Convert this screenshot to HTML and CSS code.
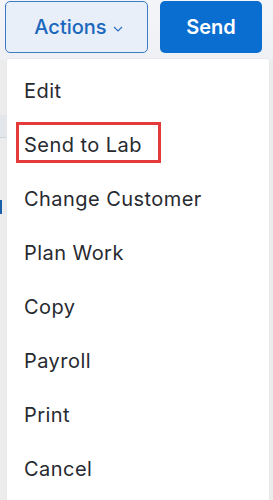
FILE: index.html
```html
<!DOCTYPE html>
<html>
<head>
<meta charset="utf-8">
<link rel="stylesheet" href="styles.css">
</head>
<body>
<div class="page">
  <div class="toolbar">
    <button class="btn-actions">Actions
      <svg class="chev" width="10" height="6" viewBox="0 0 10 6"><path d="M1 1 L5 5 L9 1" fill="none" stroke="#2a6fc0" stroke-width="1.2"/></svg>
    </button>
    <button class="btn-send">Send</button>
  </div>
  <div class="behind">
    <div class="band"></div>
    <div class="mark"></div>
  </div>
  <ul class="menu">
    <li class="item">Edit</li>
    <li class="item"><span class="hl">Send to Lab</span></li>
    <li class="item">Change Customer</li>
    <li class="item">Plan Work</li>
    <li class="item">Copy</li>
    <li class="item">Payroll</li>
    <li class="item">Print</li>
    <li class="item">Cancel</li>
  </ul>
</div>
</body>
</html>
```
FILE: styles.css
```css
html, body {
  margin: 0;
  padding: 0;
}
body {
  background: #eceef1;
  font-family: Inter, "Noto Sans", sans-serif;
  width: 273px;
  height: 500px;
  overflow: hidden;
}
.page {
  position: relative;
  height: 500px;
  background: linear-gradient(#f3f5f8, #eef0f3 60px, #ececec 60px);
}
.toolbar {
  display: flex;
  gap: 12px;
  padding: 1px 0 0 5px;
}
.btn-actions {
  box-sizing: border-box;
  width: 143px;
  height: 52px;
  border: 1px solid #3a7cc6;
  border-radius: 5px;
  background: #e8eff8;
  color: #1a67bd;
  font-family: Inter, sans-serif;
  font-size: 20px;
  font-weight: 500;
  display: flex;
  align-items: center;
  justify-content: center;
  gap: 6px;
  padding: 0 0 0 4px;
}
.chev {
  margin-top: 3px;
}
.btn-send {
  box-sizing: border-box;
  width: 102px;
  height: 52px;
  border: none;
  border-radius: 5px;
  background: #0a6ed1;
  color: #ffffff;
  font-family: Inter, sans-serif;
  font-size: 20px;
  font-weight: 600;
}
.behind {
  padding-top: 62px;
}
.band {
  height: 22px;
  width: 8px;
  background: #e3e7ec;
  border-bottom: 1px solid #cfd4da;
}
.mark {
  margin-top: 62px;
  width: 2px;
  height: 14px;
  background: #1a5fa8;
}
.menu {
  position: absolute;
  left: 6px;
  top: 58px;
  width: 264px;
  height: 460px;
  margin: 0;
  padding: 5px 0 0;
  list-style: none;
  background: #ffffff;
  box-sizing: border-box;
  border: 1px solid #e6e8eb;
  border-radius: 3px;
}
.item {
  height: 54px;
  display: flex;
  align-items: center;
  padding-left: 17px;
  font-size: 20px;
  letter-spacing: 0.45px;
  color: #272a30;
}
.hl {
  position: relative;
}
.hl::after {
  content: "";
  position: absolute;
  left: -8px;
  top: -11px;
  width: 139px;
  height: 35px;
  border: 3px solid #e53a3a;
}
```
